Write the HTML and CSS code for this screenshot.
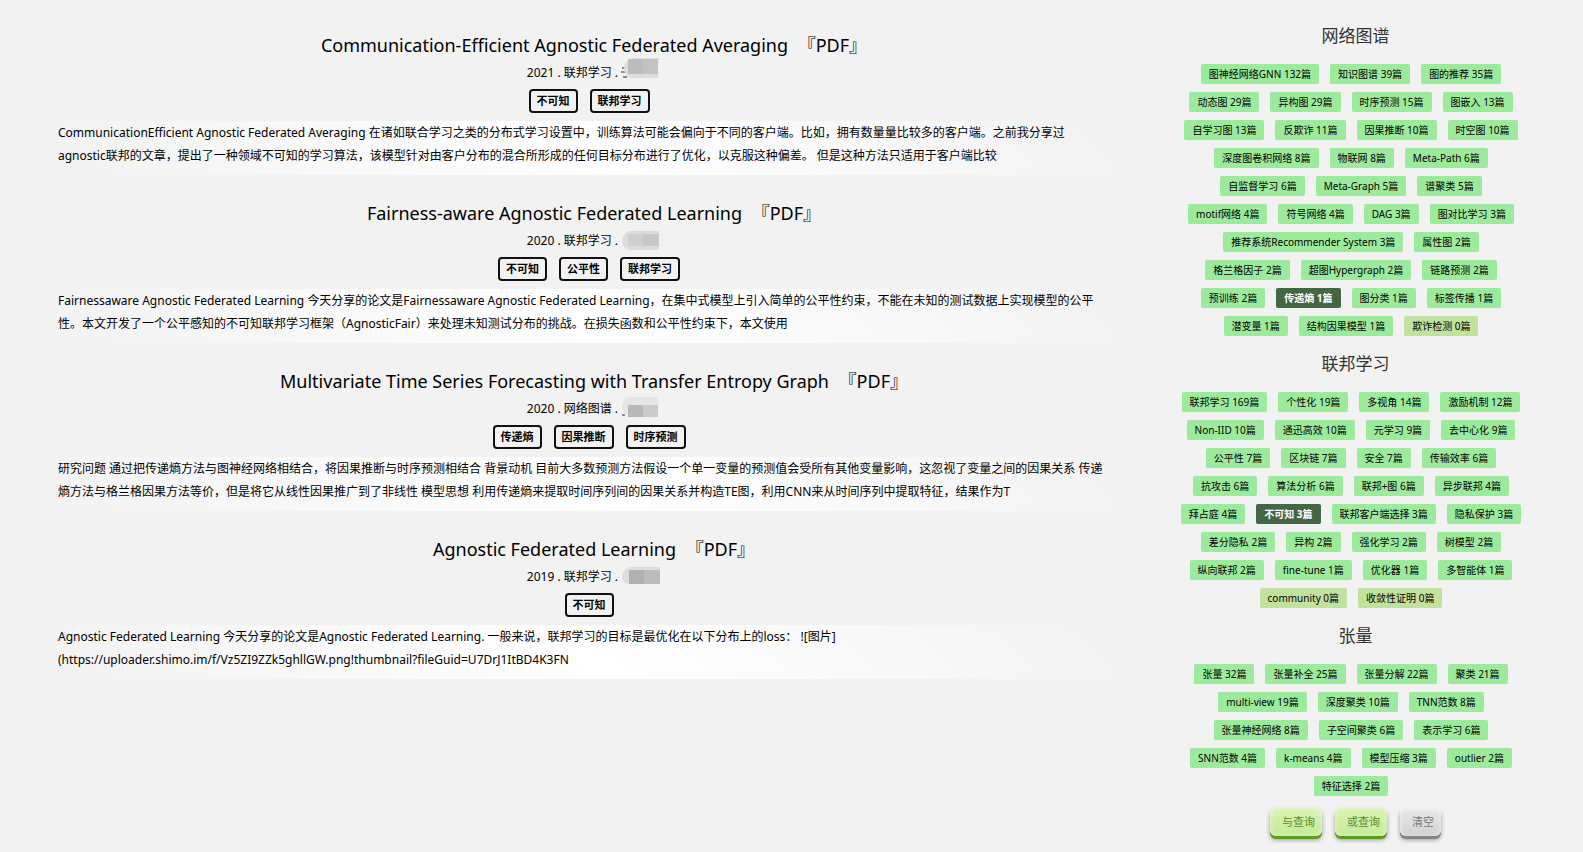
FILE: index.html
```
<!DOCTYPE html>
<html lang="zh-CN">
<head>
<meta charset="utf-8">
<title>论文检索</title>
<link rel="stylesheet" href="styles.css">
</head>
<body>
<div class="page">
<main class="papers">
  <article class="paper">
    <h2 class="title">Communication-Efficient Agnostic Federated Averaging <a href="#">『PDF』</a></h2>
    <p class="meta">2021 . 联邦学习 . <svg class="blur" width="40" height="24" viewBox="0 2 40 24"><path d="M-1 10H3M-2 14H2M0 19H4" stroke="#222" fill="none"/><path d="M1 10Q3 1 9 0H37V2H35V20H10Q1 20 1 10Z" fill="#dededf"/><path d="M5 1H20V16H5Z" fill="#bebbbd"/><path d="M20 1H35V16H20Z" fill="#c3c3c5"/></svg></p>
    <div class="badges"><a href="#">不可知</a><a href="#">联邦学习</a></div>
    <p class="abstract">CommunicationEfficient Agnostic Federated Averaging 在诸如联合学习之类的分布式学习设置中，训练算法可能会偏向于不同的客户端。比如，拥有数量量比较多的客户端。之前我分享过<br>agnostic联邦的文章，提出了一种领域不可知的学习算法，该模型针对由客户分布的混合所形成的任何目标分布进行了优化，以克服这种偏差。 但是这种方法只适用于客户端比较</p>
  </article>
  <article class="paper">
    <h2 class="title">Fairness-aware Agnostic Federated Learning <a href="#">『PDF』</a></h2>
    <p class="meta">2020 . 联邦学习 . <svg class="blur" width="40" height="24" viewBox="0 -2 40 24"><path d="M-1 10Q1 1 8 1H36V20H8Q-1 19 -1 10Z" fill="#dcdcdc"/><path d="M5 4H20V16H5Z" fill="#d0d0d0"/><path d="M20 4H36V16H20Z" fill="#c8c8c9"/></svg></p>
    <div class="badges"><a href="#">不可知</a><a href="#">公平性</a><a href="#">联邦学习</a></div>
    <p class="abstract">Fairnessaware Agnostic Federated Learning 今天分享的论文是Fairnessaware Agnostic Federated Learning，在集中式模型上引入简单的公平性约束，不能在未知的测试数据上实现模型的公平<br>性。本文开发了一个公平感知的不可知联邦学习框架（AgnosticFair）来处理未知测试分布的挑战。在损失函数和公平性约束下，本文使用</p>
  </article>
  <article class="paper">
    <h2 class="title">Multivariate Time Series Forecasting with Transfer Entropy Graph <a href="#">『PDF』</a></h2>
    <p class="meta">2020 . 网络图谱 . <svg class="blur" width="40" height="24" viewBox="0 -1 40 24"><path d="M-1 18H2" stroke="#222"/><path d="M-1 9Q1 0 8 0H35V8H6V17Q-1 16 -1 9Z" fill="#e6e6e6"/><path d="M5 8H20V20H5Z" fill="#b9b9b9"/><path d="M20 8H35V20H20Z" fill="#cbcbcd"/></svg></p>
    <div class="badges"><a href="#">传递熵</a><a href="#">因果推断</a><a href="#">时序预测</a></div>
    <p class="abstract">研究问题 通过把传递熵方法与图神经网络相结合，将因果推断与时序预测相结合 背景动机 目前大多数预测方法假设一个单一变量的预测值会受所有其他变量影响，这忽视了变量之间的因果关系 传递<br>熵方法与格兰格因果方法等价，但是将它从线性因果推广到了非线性 模型思想 利用传递熵来提取时间序列间的因果关系并构造TE图，利用CNN来从时间序列中提取特征，结果作为T</p>
  </article>
  <article class="paper">
    <h2 class="title">Agnostic Federated Learning <a href="#">『PDF』</a></h2>
    <p class="meta">2019 . 联邦学习 . <svg class="blur" width="40" height="24" viewBox="0 -2 40 24"><path d="M-1 10Q1 2 8 1H37V18H6Q-1 17 -1 10Z" fill="#dedede"/><path d="M6 4H21V18H6Z" fill="#b0b0b0"/><path d="M21 4H37V18H21Z" fill="#bcbcbc"/></svg></p>
    <div class="badges"><a href="#">不可知</a></div>
    <p class="abstract">Agnostic Federated Learning 今天分享的论文是Agnostic Federated Learning. 一般来说，联邦学习的目标是最优化在以下分布上的loss： ![图片]<br>(https://uploader.shimo.im/f/Vz5ZI9ZZk5ghllGW.png!thumbnail?fileGuid=U7DrJ1ItBD4K3FN</p>
  </article>
</main>
<aside class="filters">
  <h3 class="group">网络图谱</h3>
  <div class="tags">
    <div><button>图神经网络GNN 132篇</button><button>知识图谱 39篇</button><button>图的推荐 35篇</button></div>
    <div><button>动态图 29篇</button><button>异构图 29篇</button><button>时序预测 15篇</button><button>图嵌入 13篇</button></div>
    <div><button>自学习图 13篇</button><button>反欺诈 11篇</button><button>因果推断 10篇</button><button>时空图 10篇</button></div>
    <div><button>深度图卷积网络 8篇</button><button>物联网 8篇</button><button>Meta-Path 6篇</button></div>
    <div><button>自监督学习 6篇</button><button>Meta-Graph 5篇</button><button>谱聚类 5篇</button></div>
    <div><button>motif网络 4篇</button><button>符号网络 4篇</button><button>DAG 3篇</button><button>图对比学习 3篇</button></div>
    <div><button>推荐系统Recommender System 3篇</button><button>属性图 2篇</button></div>
    <div><button>格兰格因子 2篇</button><button>超图Hypergraph 2篇</button><button>链路预测 2篇</button></div>
    <div><button>预训练 2篇</button><button class="on">传递熵 1篇</button><button>图分类 1篇</button><button>标签传播 1篇</button></div>
    <div><button>潜变量 1篇</button><button>结构因果模型 1篇</button><button class="none">欺诈检测 0篇</button></div>
  </div>
  <h3 class="group">联邦学习</h3>
  <div class="tags">
    <div><button>联邦学习 169篇</button><button>个性化 19篇</button><button>多视角 14篇</button><button>激励机制 12篇</button></div>
    <div><button>Non-IID 10篇</button><button>通迅高效 10篇</button><button>元学习 9篇</button><button>去中心化 9篇</button></div>
    <div><button>公平性 7篇</button><button>区块链 7篇</button><button>安全 7篇</button><button>传输效率 6篇</button></div>
    <div><button>抗攻击 6篇</button><button>算法分析 6篇</button><button>联邦+图 6篇</button><button>异步联邦 4篇</button></div>
    <div><button>拜占庭 4篇</button><button class="on">不可知 3篇</button><button>联邦客户端选择 3篇</button><button>隐私保护 3篇</button></div>
    <div><button>差分隐私 2篇</button><button>异构 2篇</button><button>强化学习 2篇</button><button>树模型 2篇</button></div>
    <div><button>纵向联邦 2篇</button><button>fine-tune 1篇</button><button>优化器 1篇</button><button>多智能体 1篇</button></div>
    <div><button class="none">community 0篇</button><button class="none">收敛性证明 0篇</button></div>
  </div>
  <h3 class="group">张量</h3>
  <div class="tags">
    <div><button>张量 32篇</button><button>张量补全 25篇</button><button>张量分解 22篇</button><button>聚类 21篇</button></div>
    <div><button>multi-view 19篇</button><button>深度聚类 10篇</button><button>TNN范数 8篇</button></div>
    <div><button>张量神经网络 8篇</button><button>子空间聚类 6篇</button><button>表示学习 6篇</button></div>
    <div><button>SNN范数 4篇</button><button>k-means 4篇</button><button>模型压缩 3篇</button><button>outlier 2篇</button></div>
    <div><button>特征选择 2篇</button></div>
  </div>
  <div class="actions"><button class="go">与查询</button><button class="go">或查询</button><button class="clear">清空</button></div>
</aside>
</div>
</body>
</html>
```
FILE: styles.css
```
* { box-sizing: border-box; }
body { margin: 0; background: #f2f2f2; color: #000; font: 12px/23px "Noto Sans", "Noto Sans CJK SC", sans-serif; }
h2, h3, p { margin: 0; font-weight: 400; }
a { color: inherit; text-decoration: none; }
button { border: 0; font-family: inherit; cursor: pointer; }
.page { display: flex; align-items: flex-start; }
.papers { flex: 1; padding: 30px 50px 0; display: flex; flex-direction: column; gap: 23px; }
.paper { text-align: center; }
.title { padding-left: 10px; font-size: 18px; line-height: 30px; }
.title a { margin-left: 5px; }
.meta { padding-left: 12px; height: 24px; line-height: 26px; display: flex; justify-content: center; white-space: pre; }
.blur { flex: none; overflow: visible; margin-left: 2px; }
.badges { display: flex; justify-content: center; gap: 12px; padding: 5px 0 8px; }
.badges a { border: 2px solid #111; border-radius: 4px; padding: 0 6px; font-size: 11px; line-height: 20px; font-weight: 700; }
.abstract { padding: 0 8px 8px; text-align: left; background: linear-gradient(45deg, #f2f2f2, #fff 50%, #f2f2f2); overflow-wrap: break-word; }
.filters { flex: 0 0 405px; padding: 24px 50px 16px 0; }
.group { font-size: 17px; line-height: 24px; color: #333; text-align: center; }
.tags { display: flex; flex-direction: column; gap: 8px; padding: 16px 9px 0 0; }
.tags + .group { margin-top: 16px; }
.tags div { display: flex; justify-content: center; gap: 11px; }
.tags button { background: #9ceb9c; color: #000; border-radius: 2px; padding: 0 8px; font-size: 10px; line-height: 20px; white-space: nowrap; }
.tags .on { background: #446644; color: #fff; font-weight: 700; }
.tags .none { background: #c1e29c; }
.actions { display: flex; justify-content: center; gap: 13px; margin-top: 11px; }
.actions button { height: 29px; border-radius: 6px; padding: 0 7px 0 12px; font-size: 11px; line-height: 29px; }
.go { color: #5c8a2c; background: linear-gradient(#d9f3b5, #c5eb96); box-shadow: inset 0 1px 4px #eefadd, 0 3px 0 #5a9a24, 0 4px 4px #999; }
.clear { color: #777; background: linear-gradient(#e9e9e9, #d2d2d2); box-shadow: inset 0 1px 4px #f6f6f6, 0 3px 0 #858585, 0 4px 4px #999; }
```
